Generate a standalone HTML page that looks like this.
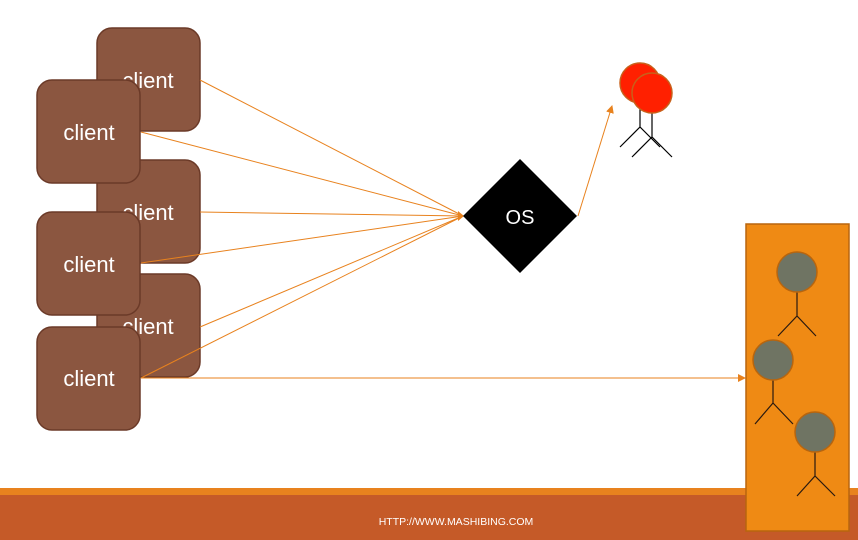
<!DOCTYPE html>
<html><head><style>
html,body{margin:0;padding:0;background:#fff;width:858px;height:540px;overflow:hidden}
</style></head><body>
<svg width="858" height="540" viewBox="0 0 858 540" xmlns="http://www.w3.org/2000/svg" style="position:absolute;left:0;top:0">
<defs>
<marker id="ah" markerWidth="8" markerHeight="8" refX="7" refY="4" orient="auto" markerUnits="userSpaceOnUse"><path d="M0,0 L8,4 L0,8 Z" fill="#e8821e"/></marker>
</defs>
<rect x="0" y="488" width="858" height="8" fill="#e8821e"/>
<rect x="0" y="495" width="858" height="45" fill="#c55a28"/>
<text x="456" y="525" font-family="Liberation Sans, sans-serif" font-size="10.5" fill="#fff" text-anchor="middle">HTTP://WWW.MASHIBING.COM</text>
<g fill="#8b5640" stroke="#6b3a28" stroke-width="1.5">
<rect x="97" y="28" width="103" height="103" rx="15"/>
<rect x="97" y="160" width="103" height="103" rx="15"/>
<rect x="97" y="274" width="103" height="103" rx="15"/>
</g>
<g font-family="Liberation Sans, sans-serif" font-size="22" fill="#fff" text-anchor="middle">
<text x="148" y="88">client</text>
<text x="148" y="220">client</text>
<text x="148" y="334">client</text>
</g>
<g stroke="#e8821e" stroke-width="1" fill="none">
<line x1="200" y1="80" x2="463" y2="216"/>
<line x1="141" y1="132" x2="463" y2="216"/>
<line x1="200" y1="212" x2="463" y2="216"/>
<line x1="141" y1="263" x2="463" y2="216"/>
<line x1="200" y1="327" x2="463" y2="216"/>
<line x1="141" y1="378" x2="463" y2="216"/>
<line x1="141" y1="378" x2="745" y2="378" marker-end="url(#ah)"/>
<line x1="578" y1="216" x2="612" y2="106" marker-end="url(#ah)"/>
</g>
<path d="M458,211 L464,216 L458,221 Z" fill="#e8821e"/>
<g fill="#8b5640" stroke="#6b3a28" stroke-width="1.5">
<rect x="37" y="80" width="103" height="103" rx="15"/>
<rect x="37" y="212" width="103" height="103" rx="15"/>
<rect x="37" y="327" width="103" height="103" rx="15"/>
</g>
<g font-family="Liberation Sans, sans-serif" font-size="22" fill="#fff" text-anchor="middle">
<text x="89" y="140">client</text>
<text x="89" y="272">client</text>
<text x="89" y="386">client</text>
</g>
<path d="M520,159 L577,216 L520,273 L463,216 Z" fill="#000"/>
<text x="520" y="224" font-family="Liberation Sans, sans-serif" font-size="20" fill="#fff" text-anchor="middle">OS</text>
<g stroke="#000" stroke-width="1.2" fill="none">
<path d="M640,100 V127 M620,147 L640,127 L660,147"/>
<path d="M652,112 V137 M632,157 L652,137 L672,157"/>
</g>
<circle cx="640" cy="83" r="20" fill="#ff2000" stroke="#c8601a" stroke-width="1.5"/>
<circle cx="652" cy="93" r="20" fill="#ff2000" stroke="#c8601a" stroke-width="1.5"/>
<rect x="746" y="224" width="103" height="307" fill="#ef8a14" stroke="#b8650e" stroke-width="1.5"/>
<g stroke="#2a1a10" stroke-width="1.2" fill="none">
<path d="M797,292 V316 M778,336 L797,316 L816,336"/>
<path d="M773,380 V403 M755,424 L773,403 L793,424"/>
<path d="M815,452 V476 M797,496 L815,476 L835,496"/>
</g>
<g fill="#6f7463" stroke="#b8650e" stroke-width="1.5">
<circle cx="797" cy="272" r="20"/>
<circle cx="773" cy="360" r="20"/>
<circle cx="815" cy="432" r="20"/>
</g>
</svg>
</body></html>
